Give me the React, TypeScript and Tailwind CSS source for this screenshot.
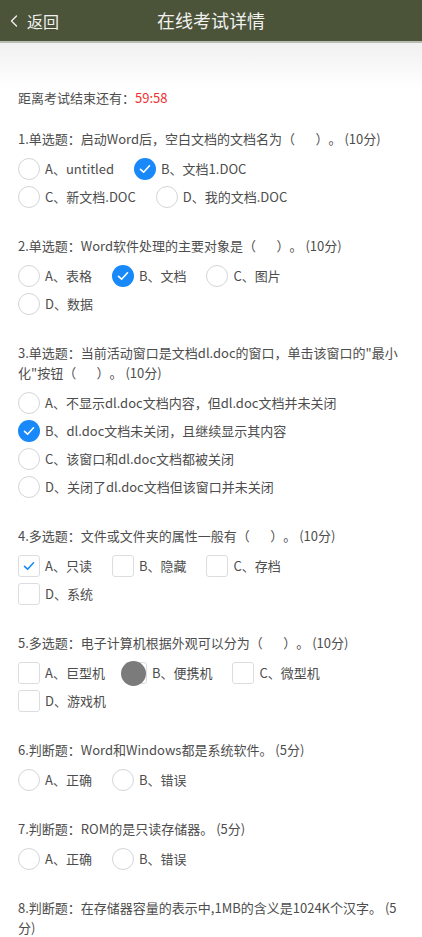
import { ChevronLeft } from "lucide-react";

type Question = {
  title: string;
  kind: "radio" | "check";
  options: string[];
  picked: number[];
  blob?: number;
};

const gap = "       ";

const questions: Question[] = [
  {
    title: `1.单选题：启动Word后，空白文档的文档名为（${gap}）。 (10分)`,
    kind: "radio",
    options: ["A、untitled", "B、文档1.DOC", "C、新文档.DOC", "D、我的文档.DOC"],
    picked: [1],
  },
  {
    title: `2.单选题：Word软件处理的主要对象是（${gap}）。 (10分)`,
    kind: "radio",
    options: ["A、表格", "B、文档", "C、图片", "D、数据"],
    picked: [1],
  },
  {
    title: `3.单选题：当前活动窗口是文档dl.doc的窗口，单击该窗口的"最小化"按钮（${gap}）。 (10分)`,
    kind: "radio",
    options: [
      "A、不显示dl.doc文档内容，但dl.doc文档并未关闭",
      "B、dl.doc文档未关闭，且继续显示其内容",
      "C、该窗口和dl.doc文档都被关闭",
      "D、关闭了dl.doc文档但该窗口并未关闭",
    ],
    picked: [1],
  },
  {
    title: `4.多选题：文件或文件夹的属性一般有（${gap}）。 (10分)`,
    kind: "check",
    options: ["A、只读", "B、隐藏", "C、存档", "D、系统"],
    picked: [0],
  },
  {
    title: `5.多选题：电子计算机根据外观可以分为（${gap}）。 (10分)`,
    kind: "check",
    options: ["A、巨型机", "B、便携机", "C、微型机", "D、游戏机"],
    picked: [],
    blob: 1,
  },
  {
    title: "6.判断题：Word和Windows都是系统软件。 (5分)",
    kind: "radio",
    options: ["A、正确", "B、错误"],
    picked: [],
  },
  {
    title: "7.判断题：ROM的是只读存储器。 (5分)",
    kind: "radio",
    options: ["A、正确", "B、错误"],
    picked: [],
  },
  {
    title: "8.判断题：在存储器容量的表示中,1MB的含义是1024K个汉字。 (5分)",
    kind: "radio",
    options: [],
    picked: [],
  },
];

function Tick({ color }: { color: string }) {
  return (
    <svg width="14" height="14" viewBox="0 0 14 14" fill="none">
      <path d="M2.5 7.3 L5.6 10.2 L11.5 3.8" stroke={color} strokeWidth="1.6" strokeLinecap="round" strokeLinejoin="round" />
    </svg>
  );
}

function Mark({ kind, on, blob }: { kind: "radio" | "check"; on: boolean; blob?: boolean }) {
  if (kind === "radio") {
    return on ? (
      <span className="flex h-[22px] w-[22px] shrink-0 items-center justify-center rounded-full bg-[#1989fa]">
        <Tick color="#ffffff" />
      </span>
    ) : (
      <span className="h-[22px] w-[22px] shrink-0 rounded-full border border-[#d4d5d8] bg-white" />
    );
  }
  return (
    <span className="relative flex h-[22px] w-[22px] shrink-0 items-center justify-center rounded-[3px] border border-[#dcdde0] bg-white">
      {on && <Tick color="#1989fa" />}
      {blob && (
        <span className="absolute left-[-5px] top-[-2px] h-[25px] w-[25px] rounded-full bg-[#7b7b7b] blur-[0.6px]" />
      )}
    </span>
  );
}

export default function App() {
  return (
    <div className="min-h-[937px] bg-white text-[13px] text-[#4d4d4d] [text-spacing-trim:space-all]" style={{ fontFamily: '"Noto Sans CJK SC", "Noto Sans", sans-serif' }}>
      <div className="flex h-[43px] items-center border-b-2 border-[#b9bcb2] bg-[#4b5339] text-[#f1f1ee]">
        <div className="flex w-[80px] items-center pl-[4px] text-[16px]">
          <ChevronLeft className="h-[20px] w-[20px]" strokeWidth={1.6} />
          <span className="ml-[3px]">返回</span>
        </div>
        <div className="flex-1 pr-[80px] text-center text-[18px]">在线考试详情</div>
      </div>

      <div className="bg-gradient-to-b from-[#f1f1f1] to-white to-[45px] px-[18px] pt-[45px]">
        <div className="leading-[20px]">
          距离考试结束还有：<span className="text-[#f23030]">59:58</span>
        </div>

        <div className="mt-[21px] flex flex-col gap-[25px]">
          {questions.map((q) => (
            <div key={q.title}>
              <div className="whitespace-pre-wrap leading-[20px]">{q.title}</div>
              {q.options.length > 0 && (
                <div className="mt-[6px] flex w-[340px] flex-wrap">
                  {q.options.map((o, i) => (
                    <div key={o} className="mr-[20px] flex h-[28px] items-center">
                      <Mark kind={q.kind} on={q.picked.includes(i)} blob={q.blob === i} />
                      <span className="ml-[5px] whitespace-nowrap">{o}</span>
                    </div>
                  ))}
                </div>
              )}
            </div>
          ))}
        </div>
      </div>
    </div>
  );
}
